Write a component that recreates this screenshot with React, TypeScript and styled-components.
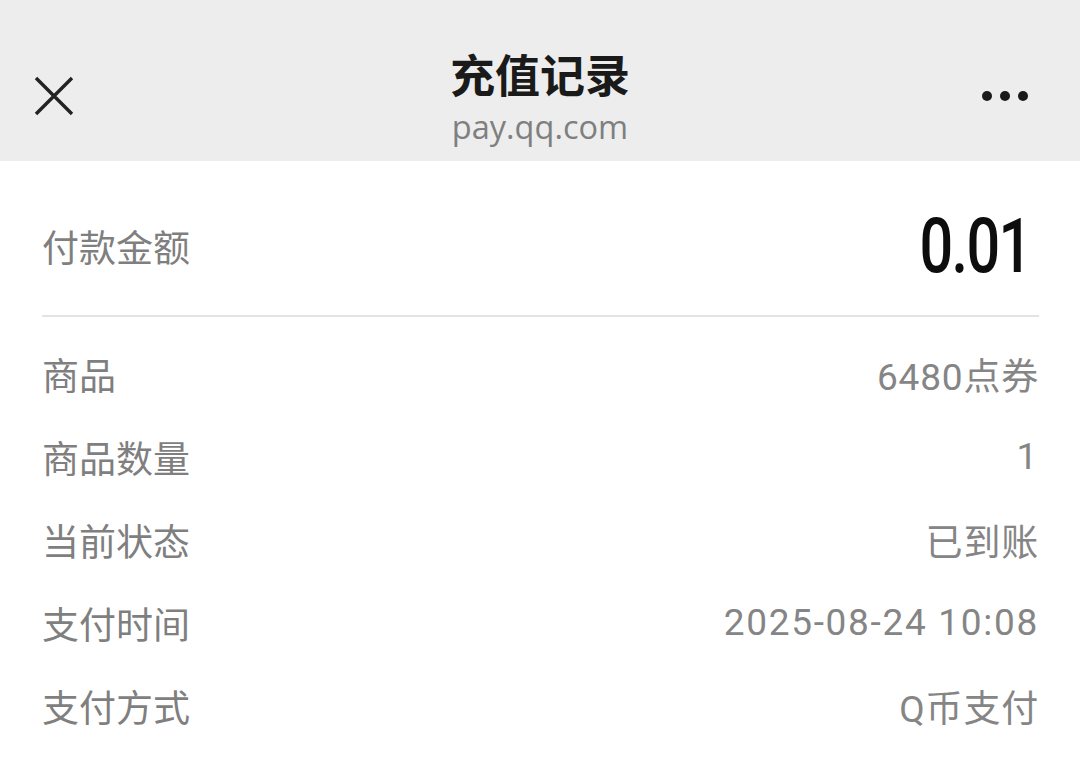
import React from 'react';
import styled, { createGlobalStyle } from 'styled-components';

const GlobalStyle = createGlobalStyle`
  html, body {
    margin: 0;
    padding: 0;
    background: #ffffff;
    font-family: Roboto, "Noto Sans CJK SC", sans-serif;
  }
`;

const Page = styled.div`
  width: 1080px;
  height: 768px;
  overflow: hidden;
  background: #ffffff;
`;

const NavBar = styled.header`
  height: 161px;
  background: #ededed;
  display: grid;
  grid-template-columns: 120px 1fr 120px;
  align-items: center;
`;

const IconButton = styled.div<{ $align: 'left' | 'right' }>`
  display: flex;
  justify-content: ${p => (p.$align === 'left' ? 'flex-start' : 'flex-end')};
  padding: ${p => (p.$align === 'left' ? '0 0 0 34px' : '0 50px 0 0')};
  margin-top: 30px;
`;

const TitleBlock = styled.div`
  display: flex;
  flex-direction: column;
  align-items: center;
  padding-top: 36px;
`;

const Title = styled.div`
  font-family: "Noto Sans CJK SC", sans-serif;
  font-size: 45px;
  font-weight: 700;
  color: #1a1a1a;
  line-height: 56px;
`;

const Subtitle = styled.div`
  font-family: "Open Sans", Roboto, sans-serif;
  font-size: 32.5px;
  color: #7f7f7f;
  line-height: 50px;
`;

const Content = styled.main`
  padding: 0 41px 0 42px;
`;

const AmountRow = styled.div`
  height: 138px;
  padding-top: 16px;
  display: flex;
  align-items: center;
  justify-content: space-between;
  border-bottom: 2px solid #e3e3e3;
`;

const Label = styled.span`
  font-family: "Noto Sans CJK SC", sans-serif;
  font-size: 37px;
  color: #7f7f7f;
`;

const Amount = styled.span`
  font-family: Roboto, sans-serif;
  font-weight: 500;
  font-size: 76px;
  color: #0d0d0d;
  margin-right: 8px;
  letter-spacing: -2px;
  transform: scaleX(0.78);
  transform-origin: right center;
`;

const List = styled.div`
  padding-top: 15px;
  display: flex;
  flex-direction: column;
`;

const Row = styled.div`
  height: 83px;
  display: flex;
  align-items: center;
  justify-content: space-between;
`;

const Value = styled.span<{ $numeric?: boolean }>`
  font-family: Roboto, "Noto Sans CJK SC", sans-serif;
  font-size: 37px;
  color: #858585;
  letter-spacing: ${p => (p.$numeric ? '1.7px' : '0.8px')};
`;

const rows: [string, string][] = [
  ['商品', '6480点券'],
  ['商品数量', '1'],
  ['当前状态', '已到账'],
  ['支付时间', '2025-08-24 10:08'],
  ['支付方式', 'Q币支付'],
];

const CloseIcon = () => (
  <svg width="40" height="40" viewBox="0 0 40 40">
    <path d="M2 2 L38 38 M38 2 L2 38" stroke="#222" strokeWidth="3.4" strokeLinecap="butt" />
  </svg>
);

const MoreIcon = () => (
  <svg width="50" height="14" viewBox="0 0 50 14">
    <circle cx="7" cy="7" r="5" fill="#1a1a1a" />
    <circle cx="25" cy="7" r="5" fill="#1a1a1a" />
    <circle cx="43" cy="7" r="5" fill="#1a1a1a" />
  </svg>
);

const App: React.FC = () => {
  return (
    <Page>
      <GlobalStyle />
      <NavBar>
        <IconButton $align="left">
          <CloseIcon />
        </IconButton>
        <TitleBlock>
          <Title>充值记录</Title>
          <Subtitle>pay.qq.com</Subtitle>
        </TitleBlock>
        <IconButton $align="right">
          <MoreIcon />
        </IconButton>
      </NavBar>
      <Content>
        <AmountRow>
          <Label>付款金额</Label>
          <Amount>0.01</Amount>
        </AmountRow>
        <List>
          {rows.map(([k, v]) => (
            <Row key={k}>
              <Label>{k}</Label>
              <Value $numeric={/^[\d\s:-]+$/.test(v)}>{v}</Value>
            </Row>
          ))}
        </List>
      </Content>
    </Page>
  );
};

export default App;
